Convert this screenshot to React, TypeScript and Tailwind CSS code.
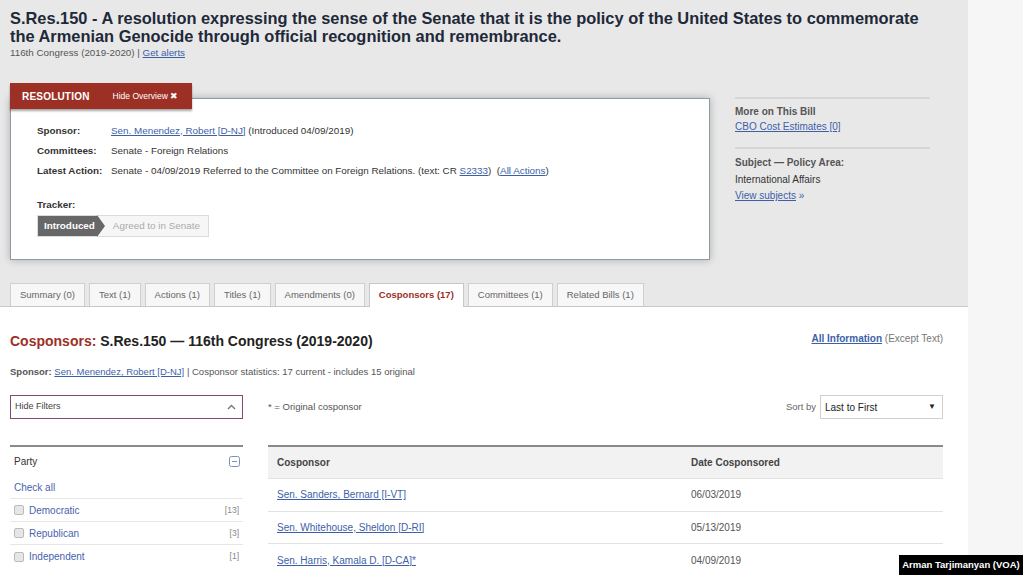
import { FC } from "react";

const link = "text-[#3d5fa9] underline";

const tabs = [
  { label: "Summary (0)" },
  { label: "Text (1)" },
  { label: "Actions (1)" },
  { label: "Titles (1)" },
  { label: "Amendments (0)" },
  { label: "Cosponsors (17)", active: true },
  { label: "Committees (1)" },
  { label: "Related Bills (1)" },
];

const parties = [
  { name: "Democratic", count: "[13]" },
  { name: "Republican", count: "[3]" },
  { name: "Independent", count: "[1]" },
];

const cosponsors = [
  { name: "Sen. Sanders, Bernard [I-VT]", date: "06/03/2019" },
  { name: "Sen. Whitehouse, Sheldon [D-RI]", date: "05/13/2019" },
  { name: "Sen. Harris, Kamala D. [D-CA]*", date: "04/09/2019" },
];

const Overview: FC = () => {
  return (
    <div className="flex items-start">
      <div className="flex w-[700px] flex-col">
        <div className="relative z-10 flex h-[26px] w-[182px] items-center gap-[23px] bg-[#9d3024] px-[12px] shadow-[0_2px_2px_rgba(0,0,0,0.35)]">
          <span className="text-[10px] font-bold tracking-[0.2px] text-white">RESOLUTION</span>
          <span className="text-[8.5px] text-white">Hide Overview ✖</span>
        </div>
        <div className="-mt-[11px] border border-[#8d9aa3] bg-white pb-[22px] pl-[26px] pt-[22px] text-[9.85px] text-[#333] shadow-[0_0_8px_rgba(0,0,0,0.25)]">
          <div className="flex h-[20px] items-center">
            <span className="w-[74px] font-bold">Sponsor:</span>
            <span>
              <a className={link}>Sen. Menendez, Robert [D-NJ]</a> (Introduced 04/09/2019)
            </span>
          </div>
          <div className="flex h-[20px] items-center">
            <span className="w-[74px] font-bold">Committees:</span>
            <span>Senate - Foreign Relations</span>
          </div>
          <div className="flex h-[20px] items-center">
            <span className="w-[74px] font-bold">Latest Action:</span>
            <span>
              Senate - 04/09/2019 Referred to the Committee on Foreign Relations. (text: CR{" "}
              <a className={link}>S2333</a>)&nbsp; (<a className={link}>All Actions</a>)
            </span>
          </div>
          <div className="mt-[14px] flex h-[20px] items-center font-bold">Tracker:</div>
          <div className="flex h-[22px] w-[172px] items-center border border-[#dcdcdc] bg-[#f6f6f6]">
            <div className="flex h-full items-center bg-[#676767] pl-[6px] pr-[3px] font-bold text-white">
              Introduced
            </div>
            <svg width="8" height="22" viewBox="0 0 8 22" className="-ml-px">
              <polygon points="0,0 8,11 0,22" fill="#676767" />
            </svg>
            <span className="ml-[8px] text-[#aaa]">Agreed to in Senate</span>
          </div>
        </div>
      </div>
      <div className="ml-[25px] mt-[14px] w-[195px] text-[10px]">
        <div className="border-t-2 border-[#d6d6d6] pt-[5px]">
          <div className="h-[15px] font-bold text-[#555]">More on This Bill</div>
          <a className={`${link} block h-[15px]`}>CBO Cost Estimates [0]</a>
        </div>
        <div className="mt-[13px] border-t-2 border-[#d6d6d6] pt-[6px]">
          <div className="h-[17px] font-bold text-[#555]">Subject — Policy Area:</div>
          <div className="h-[16px] text-[#333]">International Affairs</div>
          <div className="h-[16px]">
            <a className={link}>View subjects</a> <span className="text-[#3d5fa9]">»</span>
          </div>
        </div>
      </div>
    </div>
  );
};

const Tabs: FC = () => {
  return (
    <div className="mt-[23px] flex gap-[4px] border-b border-[#c8c8c8] px-[10px]">
      {tabs.map((t) => (
        <div
          key={t.label}
          className={
            t.active
              ? "-mb-px flex h-[24px] items-center border border-b-0 border-[#c8c8c8] bg-white px-[9px] text-[9.5px] font-bold text-[#9d3024]"
              : "flex h-[23px] items-center border border-b-0 border-[#cfcfcf] bg-[#f7f7f7] px-[9px] text-[9.5px] text-[#666]"
          }
        >
          {t.label}
        </div>
      ))}
    </div>
  );
};

const Filters: FC = () => {
  return (
    <div className="w-[233px] border-t-2 border-[#8a8a8a] text-[10px]">
      <div className="flex h-[29px] items-center justify-between pl-[4px] pr-[3px]">
        <span className="text-[#333]">Party</span>
        <svg width="11" height="11" viewBox="0 0 11 11">
          <rect x="0.5" y="0.5" width="10" height="10" rx="2" fill="none" stroke="#7c8fc0" />
          <line x1="3" y1="5.5" x2="8" y2="5.5" stroke="#7c8fc0" />
        </svg>
      </div>
      <div className="flex h-[23px] items-center border-b border-[#e6e6e6] pl-[4px] text-[#4a5fae]">Check all</div>
      {parties.map((p) => (
        <div
          key={p.name}
          className="flex h-[23px] items-center justify-between border-b border-[#e6e6e6] pl-[4px] pr-[4px] last:border-b-0"
        >
          <div className="flex items-center gap-[5px]">
            <span className="h-[10px] w-[10px] rounded-[2px] border border-[#bbb] bg-[#e6e6e6]" />
            <span className="text-[#4a5fae]">{p.name}</span>
          </div>
          <span className="text-[8.5px] text-[#888]">{p.count}</span>
        </div>
      ))}
    </div>
  );
};

const Table: FC = () => {
  return (
    <div className="flex-1 border-t-2 border-[#8a8a8a] text-[10px]">
      <div className="flex h-[32px] items-center border-b border-[#e2e2e2] bg-[#f2f2f2] font-bold text-[#444]">
        <span className="w-[423px] pl-[9px]">Cosponsor</span>
        <span>Date Cosponsored</span>
      </div>
      {cosponsors.map((c) => (
        <div key={c.name} className="flex h-[32.5px] items-center border-b border-[#e2e2e2] last:border-b-0">
          <span className="w-[423px] pl-[9px]">
            <a className={link}>{c.name}</a>
          </span>
          <span className="text-[#555]">{c.date}</span>
        </div>
      ))}
    </div>
  );
};

export default function App() {
  return (
    <div className="relative flex h-[575px] w-[1023px] overflow-hidden bg-[#f6f6f6] font-['Liberation_Sans',Arial,sans-serif]">
      <div className="flex w-[968px] flex-col">
        <div className="bg-[#e8e8e8] pt-[9px]">
          <div className="px-[10px]">
            <h1 className="max-w-[930px] text-[16.4px] font-bold leading-[18px] text-[#1e2939]">
              S.Res.150 - A resolution expressing the sense of the Senate that it is the policy of the United States to commemorate the Armenian Genocide through official recognition and remembrance.
            </h1>
            <div className="mt-[2px] text-[9.8px] leading-[12px] text-[#555]">
              116th Congress (2019-2020) | <a className={link}>Get alerts</a>
            </div>
            <div className="mt-[24px]">
              <Overview />
            </div>
          </div>
          <Tabs />
        </div>
        <div className="flex-1 bg-white px-[10px] pr-[25px]">
          <div className="mt-[25px] flex items-center justify-between">
            <h2 className="text-[14px] font-bold leading-[18px] text-[#222]">
              <span className="text-[#9d3024]">Cosponsors:</span> S.Res.150 — 116th Congress (2019-2020)
            </h2>
            <div className="-mt-[6px] text-[10px] text-[#777]">
              <a className="font-bold text-[#3d5fa9] underline">All Information</a> (Except Text)
            </div>
          </div>
          <div className="mt-[16px] text-[9.5px] leading-[12px] text-[#555]">
            <span className="font-bold">Sponsor:</span> <a className={link}>Sen. Menendez, Robert [D-NJ]</a> | Cosponsor statistics: 17 current - includes 15 original
          </div>
          <div className="mt-[17px] flex h-[24px] items-center">
            <div className="flex h-full w-[233px] items-center justify-between border border-[#7f4b74] pl-[4px] pr-[6px]">
              <span className="text-[9px] text-[#444]">Hide Filters</span>
              <svg width="9" height="6" viewBox="0 0 9 6">
                <polyline points="1,5 4.5,1.5 8,5" fill="none" stroke="#777" strokeWidth="1.4" />
              </svg>
            </div>
            <span className="ml-[25px] text-[9.5px] text-[#555]">* = Original cosponsor</span>
            <div className="ml-auto flex h-full items-center">
              <span className="mr-[4px] text-[9.5px] text-[#666]">Sort by</span>
              <div className="flex h-full w-[123px] items-center justify-between border border-[#d0d0d0] pl-[4px] pr-[6px]">
                <span className="text-[10px] text-[#222]">Last to First</span>
                <span className="text-[8px] text-[#222]">▼</span>
              </div>
            </div>
          </div>
          <div className="mt-[26px] flex gap-[25px]">
            <Filters />
            <Table />
          </div>
        </div>
      </div>
      <div className="flex-1" />
      <div className="absolute bottom-0 right-0 flex h-[20px] w-[124px] items-center justify-center bg-black text-[9.5px] font-bold text-white">
        Arman Tarjimanyan (VOA)
      </div>
    </div>
  );
}
